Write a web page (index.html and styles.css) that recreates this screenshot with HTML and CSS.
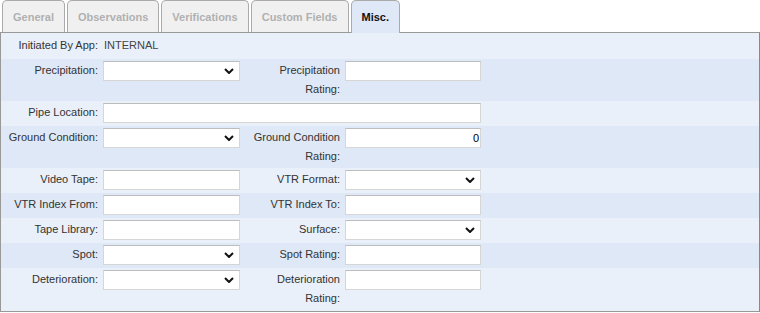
FILE: index.html
```html
<!DOCTYPE html>
<html lang="en">
<head>
    <meta charset="UTF-8">
    <meta name="viewport" content="width=device-width, initial-scale=1.0">
    <title>Misc.</title>
    <link rel="stylesheet" href="styles.css">
</head>
<body>
    <div class="tabs">
        <a class="tab">General</a>
        <a class="tab">Observations</a>
        <a class="tab">Verifications</a>
        <a class="tab">Custom Fields</a>
        <a class="tab active">Misc.</a>
    </div>
    <div class="panel">
        <div class="row light">
            <div class="label">Initiated By App:</div>
            <div class="value">INTERNAL</div>
        </div>
        <div class="row dark">
            <div class="label">Precipitation:</div>
            <div class="select-wrap">
                <select class="field"><option></option></select>
                <svg class="chevron" width="10" height="6" viewBox="0 0 10 6"><polyline points="1,1 5,5 9,1" fill="none" stroke="#111" stroke-width="2"/></svg>
            </div>
            <div class="label">Precipitation Rating:</div>
            <input class="field" type="text">
        </div>
        <div class="row light">
            <div class="label">Pipe Location:</div>
            <input class="field wide" type="text">
        </div>
        <div class="row dark">
            <div class="label">Ground Condition:</div>
            <div class="select-wrap">
                <select class="field"><option></option></select>
                <svg class="chevron" width="10" height="6" viewBox="0 0 10 6"><polyline points="1,1 5,5 9,1" fill="none" stroke="#111" stroke-width="2"/></svg>
            </div>
            <div class="label">Ground Condition Rating:</div>
            <input class="field number" type="text" value="0">
        </div>
        <div class="row light">
            <div class="label">Video Tape:</div>
            <input class="field" type="text">
            <div class="label">VTR Format:</div>
            <div class="select-wrap">
                <select class="field"><option></option></select>
                <svg class="chevron" width="10" height="6" viewBox="0 0 10 6"><polyline points="1,1 5,5 9,1" fill="none" stroke="#111" stroke-width="2"/></svg>
            </div>
        </div>
        <div class="row dark">
            <div class="label">VTR Index From:</div>
            <input class="field" type="text">
            <div class="label">VTR Index To:</div>
            <input class="field" type="text">
        </div>
        <div class="row light">
            <div class="label">Tape Library:</div>
            <input class="field" type="text">
            <div class="label">Surface:</div>
            <div class="select-wrap">
                <select class="field"><option></option></select>
                <svg class="chevron" width="10" height="6" viewBox="0 0 10 6"><polyline points="1,1 5,5 9,1" fill="none" stroke="#111" stroke-width="2"/></svg>
            </div>
        </div>
        <div class="row dark">
            <div class="label">Spot:</div>
            <div class="select-wrap">
                <select class="field"><option></option></select>
                <svg class="chevron" width="10" height="6" viewBox="0 0 10 6"><polyline points="1,1 5,5 9,1" fill="none" stroke="#111" stroke-width="2"/></svg>
            </div>
            <div class="label">Spot Rating:</div>
            <input class="field" type="text">
        </div>
        <div class="row light">
            <div class="label">Deterioration:</div>
            <div class="select-wrap">
                <select class="field"><option></option></select>
                <svg class="chevron" width="10" height="6" viewBox="0 0 10 6"><polyline points="1,1 5,5 9,1" fill="none" stroke="#111" stroke-width="2"/></svg>
            </div>
            <div class="label">Deterioration Rating:</div>
            <input class="field" type="text">
        </div>
    </div>
</body>
</html>
```

FILE: styles.css
```css
body {
    margin: 0;
    font-family: "Liberation Sans", Arial, sans-serif;
    font-size: 11px;
    color: #333;
    background: #ffffff;
}
.tabs {
    display: flex;
    align-items: flex-end;
    gap: 2px;
    height: 32px;
    padding-left: 2px;
}
.tab {
    box-sizing: border-box;
    height: 32px;
    padding: 0 10px;
    display: flex;
    align-items: center;
    border: 1px solid #aaa;
    border-bottom: none;
    border-radius: 5px 5px 0 0;
    background: #f0f0f0;
    color: #b0b0b0;
    font-weight: bold;
    cursor: pointer;
}
.tab.active {
    height: 33px;
    margin-bottom: -1px;
    position: relative;
    z-index: 1;
    background: #dfe8f6;
    color: #111;
}
.panel {
    border: 1px solid #999;
    border-right-color: #888;
    background: #e9f0f9;
    padding: 1px 0;
}
.row {
    display: grid;
    grid-template-columns: 97px 137px 95px 136px;
    column-gap: 5px;
    align-items: start;
    padding: 2px 0 3px;
}
.row.light {
    background: #e9f0f9;
}
.row.dark {
    background: #dfe8f6;
}
.label {
    text-align: right;
    line-height: 18.5px;
    color: #333;
}
.value {
    min-height: 20px;
    line-height: 18.5px;
    padding-left: 1px;
    color: #444;
}
.field {
    box-sizing: border-box;
    display: block;
    width: 100%;
    height: 20px;
    margin: 0;
    padding: 0 2px;
    border: 1px solid #d6d6d6;
    border-top-color: #bdbdbd;
    border-radius: 0;
    background: #ffffff;
    font-family: inherit;
    font-size: 11px;
    color: #000;
    outline: none;
}
.field.wide {
    grid-column: 2 / 5;
}
.field.number {
    text-align: right;
    padding-right: 1px;
}
.select-wrap {
    position: relative;
}
.select-wrap select {
    appearance: none;
    -webkit-appearance: none;
}
.select-wrap .chevron {
    position: absolute;
    right: 6px;
    top: 7px;
    pointer-events: none;
}
```
